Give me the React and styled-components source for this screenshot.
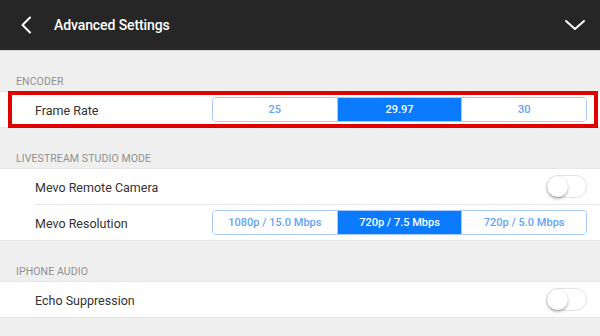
import styled, { createGlobalStyle } from 'styled-components';

const GlobalStyle = createGlobalStyle`
  body {
    margin: 0;
    background: #efefef;
    font-family: Roboto, "Liberation Sans", Arial, sans-serif;
  }
`;

const Screen = styled.div`
  width: 600px;
  height: 336px;
  overflow: hidden;
  background: #efefef;
`;

const TopBar = styled.header`
  height: 50px;
  display: flex;
  align-items: center;
  padding: 0 14px 0 20px;
  background: #262626;
  border-bottom: 1px solid #d8d8d8;
  color: #fff;

  h1 {
    margin: 0 0 0 20px;
    flex: 1;
    font-size: 14px;
    font-weight: 500;
    letter-spacing: -0.1px;
  }
`;

const SectionLabel = styled.div`
  padding: 25px 16px 3px;
  line-height: 12px;
  font-size: 10.5px;
  color: #909090;
  text-transform: uppercase;
  letter-spacing: 0.1px;
`;

const Section = styled.section`
  position: relative;
  background: #fff;
  border-top: 1px solid #e6e6e6;
  border-bottom: 1px solid #e6e6e6;

  ${({ $highlight }) =>
    $highlight &&
    `
    &::after {
      content: '';
      position: absolute;
      top: -1px;
      bottom: -1px;
      left: 8px;
      right: 2px;
      border: 4px solid #e10000;
    }
  `}
`;

const Row = styled.div`
  height: 35px;
  margin-left: 35px;
  padding-right: 13px;
  display: flex;
  align-items: center;
  justify-content: space-between;
  font-size: 12.5px;
  color: #333;

  & + & {
    border-top: 1px solid #e8e8e8;
  }
`;

const RowLabel = styled.span`
  padding-top: 2px;
`;

const Segmented = styled.div`
  width: 375px;
  height: 25px;
  box-sizing: border-box;
  display: flex;
  border: 1px solid #a9c8fb;
  border-radius: 4px;
  overflow: hidden;
`;

const Segment = styled.div`
  flex: 1;
  display: flex;
  align-items: center;
  justify-content: center;
  font-size: 11px;
  font-weight: 500;
  color: ${({ $active }) => ($active ? '#fff' : '#66a2f6')};
  background: ${({ $active }) => ($active ? '#0a7aff' : '#fff')};

  & + & {
    border-left: 1px solid #a9c8fb;
  }
`;

const Toggle = styled.span`
  position: relative;
  width: 41px;
  height: 23px;
  box-sizing: border-box;
  border-radius: 12px;
  border: 1px solid #e2e2e2;
  background: #fff;

  &::after {
    content: '';
    position: absolute;
    top: 0;
    left: 0;
    width: 21px;
    height: 21px;
    border-radius: 50%;
    background: #fff;
    box-shadow: 0 2px 3px rgba(0, 0, 0, 0.28), 0 0 1px rgba(0, 0, 0, 0.15);
  }
`;

const Chevron = ({ dir }) =>
  dir === 'left' ? (
    <svg width="14" height="18" viewBox="0 0 14 18">
      <path d="M10 1.5 L2.5 9 L10 16.5" fill="none" stroke="#fff" strokeWidth="2" strokeLinecap="round" strokeLinejoin="round" />
    </svg>
  ) : (
    <svg width="22" height="12" viewBox="0 0 22 12">
      <path d="M2 2 L11 10 L20 2" fill="none" stroke="#fff" strokeWidth="2" strokeLinecap="round" strokeLinejoin="round" />
    </svg>
  );

const SegmentedControl = ({ options, value }) => (
  <Segmented>
    {options.map((o) => (
      <Segment key={o} $active={o === value}>
        {o}
      </Segment>
    ))}
  </Segmented>
);

const App = () => {
  return (
    <Screen>
      <GlobalStyle />
      <TopBar>
        <Chevron dir="left" />
        <h1>Advanced Settings</h1>
        <Chevron dir="down" />
      </TopBar>

      <SectionLabel>Encoder</SectionLabel>
      <Section $highlight>
        <Row>
          <RowLabel>Frame Rate</RowLabel>
          <SegmentedControl options={['25', '29.97', '30']} value="29.97" />
        </Row>
      </Section>

      <SectionLabel>Livestream Studio Mode</SectionLabel>
      <Section>
        <Row>
          <RowLabel>Mevo Remote Camera</RowLabel>
          <Toggle />
        </Row>
        <Row>
          <RowLabel>Mevo Resolution</RowLabel>
          <SegmentedControl
            options={['1080p / 15.0 Mbps', '720p / 7.5 Mbps', '720p / 5.0 Mbps']}
            value="720p / 7.5 Mbps"
          />
        </Row>
      </Section>

      <SectionLabel>iPhone Audio</SectionLabel>
      <Section>
        <Row>
          <RowLabel>Echo Suppression</RowLabel>
          <Toggle />
        </Row>
      </Section>
    </Screen>
  );
};

export default App;
